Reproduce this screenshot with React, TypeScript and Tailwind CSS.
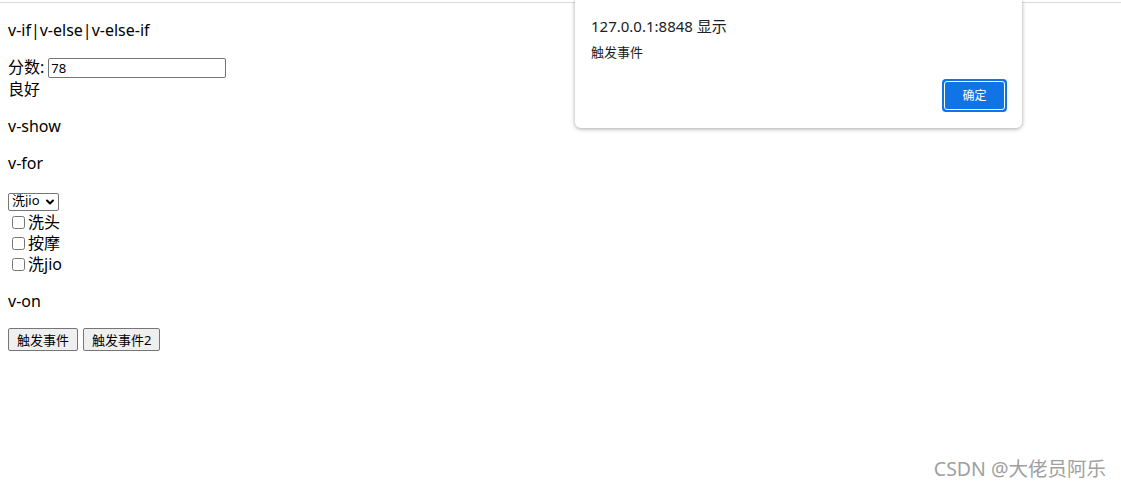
import React, { useState } from 'react';
import { ChevronDown } from 'lucide-react';

const services = ['洗头', '按摩', '洗jio'];

export default function App() {
  const [score, setScore] = useState('78');
  const [service, setService] = useState('洗jio');

  const n = Number(score);
  const grade = n >= 90 ? '优秀' : n >= 75 ? '良好' : n >= 60 ? '及格' : '不及格';

  return (
    <div className="relative w-[1121px] h-[489px] bg-white overflow-hidden text-black text-[16px] font-['Noto_Sans','Noto_Sans_CJK_SC',sans-serif]">
      <div className="mt-[2px] h-px bg-[#dadada]" />

      <div className="px-[8px]">
        <p className="mt-[17px] leading-[21px]">v-if|v-else|v-else-if</p>

        <div className="mt-[15px] h-[23px] flex items-center leading-[21px]">
          <span>分数:</span>
          <input
            value={score}
            onChange={e => setScore(e.target.value)}
            className="ml-[4px] w-[178px] h-[20px] px-[2px] border border-[#767676] rounded-[2px] text-[13px] leading-[16px] outline-none"
          />
        </div>
        <div className="leading-[21px]">{grade}</div>

        <p className="mt-[16px] leading-[21px]">v-show</p>
        <p className="mt-[16px] leading-[21px]">v-for</p>

        <div className="mt-[16px] h-[22px] pt-[3px]">
          <div className="relative w-[51px] h-[18px]">
            <select
              value={service}
              onChange={e => setService(e.target.value)}
              className="appearance-none block w-full h-full pl-[3px] pt-0 pb-[3px] border border-[#767676] rounded-[2px] text-[13px] leading-[13px] outline-none"
            >
              {services.map(s => (
                <option key={s} value={s}>{s}</option>
              ))}
            </select>
            <ChevronDown size={12} strokeWidth={4} className="absolute right-[3px] top-[3px] pointer-events-none" />
          </div>
        </div>

        {services.map(s => (
          <label key={s} className="h-[21px] flex items-center leading-[21px]">
            <input type="checkbox" className="ml-[4px] mr-[3px] w-[13px] h-[13px]" />
            {s}
          </label>
        ))}

        <p className="mt-[16px] leading-[21px]">v-on</p>

        <div className="mt-[16px] flex gap-[5px]">
          <button className="h-[23px] px-[8px] border border-[#767676] rounded-[2px] bg-[#efefef] text-[13px] leading-[16px]">触发事件</button>
          <button className="h-[23px] px-[8px] border border-[#767676] rounded-[2px] bg-[#efefef] text-[13px] leading-[16px]">触发事件2</button>
        </div>
      </div>

      {/* alert dialog */}
      <div className="absolute left-[575px] top-0 w-[447px] h-[128px] bg-white rounded-b-[6px] shadow-[0_1px_4px_rgba(0,0,0,0.35)] px-[16px] flex flex-col">
        <div className="mt-[16px] text-[15px] leading-[21px] text-[#202124]">127.0.0.1:8848 显示</div>
        <div className="mt-[7px] text-[13px] leading-[17px] text-[#202124]">触发事件</div>
        <div className="flex justify-end mt-[18px] -mr-[1px]">
          <button className="w-[65px] h-[33px] rounded-[4px] bg-[#1174e6] border-2 border-[#1174e6] text-white text-[12px] flex items-center justify-center">
            <span className="w-full h-full rounded-[3px] border border-white flex items-center justify-center">确定</span>
          </button>
        </div>
      </div>

      <div className="absolute right-[15px] bottom-[8px] text-[19.5px] leading-[24px] text-[#a0a0a0]">CSDN @大佬员阿乐</div>
    </div>
  );
}
